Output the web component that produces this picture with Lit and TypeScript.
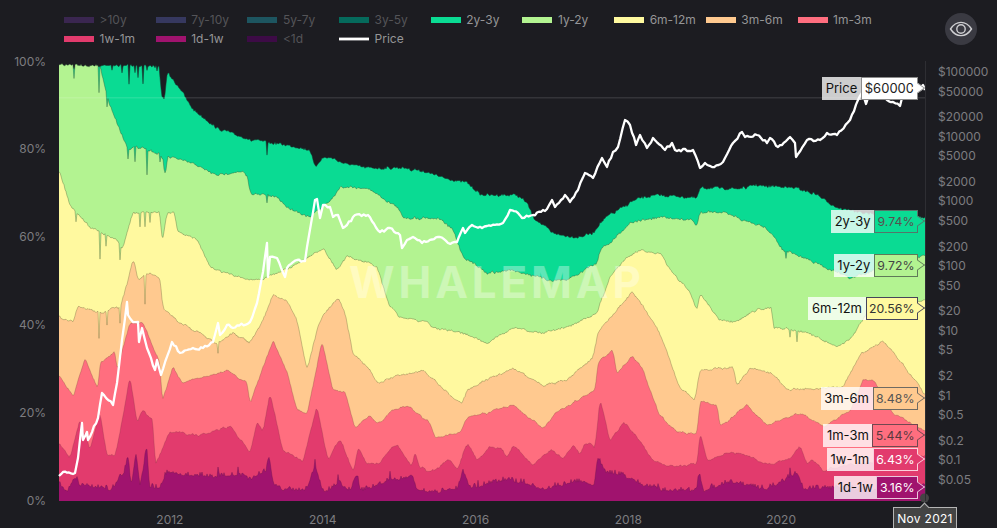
import { LitElement, html, css, svg } from "lit";
import { customElement } from "lit/decorators.js";

type Pt = [number, number];

const pairs = (s: string): Pt[] =>
  s.trim().split(";").map((p) => {
    const [x, y] = p.split(",").map(Number);
    return [x, y] as Pt;
  });

interface Band {
  color: string;
  amp: number;
  wave: number;
  edge: string;
  up?: boolean;
  keys: string;
  spikes: Pt[];
}

const BANDS: Band[] = [
  {
    color: "#0adb93", amp: 1.2, wave: 0.8, edge: "rgba(20,60,50,.5)",
    keys: "59,68;95,68;100,65;130,65;155,66;160,67;161,97;165,98;167,71;183,93;193,110;217,128;250,140;267,142;290,146;310,150;315,167;323,157;333,158;340,162;367,168;400,168;417,170;447,178;467,183;480,195;517,195;527,203;533,217;553,233;577,238;593,233;600,223;610,215;623,207;640,197;660,195;697,198;700,188;747,188;753,185;797,188;817,195;837,208;860,212;890,215;925,218",
    spikes: [[122,8],[129,20],[135,7],[138,11],[143,18],[147,6],[112,5],[267,12],[157,5]],
  },
  {
    color: "#b3f391", amp: 1.1, wave: 0.9, edge: "rgba(40,80,50,.38)",
    keys: "59,65;100,66;107,97;120,130;128,148;143,147;160,155;164,160;165,185;167,157;190,162;217,175;243,172;248,178;250,193;277,197;287,207;303,215;310,217;333,198;340,187;367,188;397,207;403,218;440,218;453,230;463,257;480,267;487,273;513,270;550,280;567,280;597,263;600,250;610,243;630,223;660,217;693,220;697,227;700,212;723,212;743,220;767,228;783,250;810,260;850,278;870,272;900,262;925,255",
    spikes: [[74,15],[99,28],[107,12],[128,10],[135,15],[147,26],[160,8],[267,8],[786,8]],
  },
  {
    color: "#fff99f", amp: 0.9, wave: 0.9, edge: "rgba(70,90,50,.35)",
    keys: "59,170;70,205;90,227;117,240;122,250;133,213;160,212;162,243;167,213;175,212;177,232;197,240;210,267;237,277;260,280;300,263;323,248;337,270;347,257;367,262;377,267;390,307;400,317;427,322;433,328;463,333;487,343;513,328;543,333;567,327;597,313;600,303;610,277;627,257;640,250;660,253;670,270;690,292;697,310;700,293;720,320;733,323;757,310;772,307;773,327;807,332;837,347;850,340;867,313;900,303;925,300",
    spikes: [[76,10],[100,28],[106,12],[120,14],[140,14],[145,14],[150,10],[790,7],[797,10]],
  },
  {
    color: "#ffc98f", amp: 0.9, wave: 1, edge: "rgba(90,90,50,.32)",
    keys: "59,317;73,322;78,305;100,313;120,307;128,280;133,258;138,280;143,277;150,273;160,277;163,308;180,323;200,333;217,343;233,333;250,343;263,320;273,295;287,302;297,320;307,370;317,330;323,315;338,298;345,313;353,353;370,370;377,383;390,378;423,370;447,392;462,405;467,390;497,375;513,368;543,385;567,380;593,357;598,333;610,318;617,310;632,292;643,307;660,333;680,388;695,400;700,370;733,367;737,385;750,368;773,373;787,390;820,388;843,387;860,355;883,340;897,357;920,387;925,394",
    spikes: [[99,26],[107,14],[120,16],[218,10],[145,28]],
  },
  {
    color: "#ff6e7f", amp: 0.7, wave: 1.2, edge: "rgba(110,70,50,.28)",
    keys: "59,375;73,397;85,358;98,390;100,363;115,352;117,370;130,323;143,323;160,363;162,402;173,367;183,383;227,370;247,383;250,403;273,340;287,373;297,410;307,415;322,342;333,390;345,392;355,427;370,415;377,425;393,410;407,405;430,423;435,437;460,432;467,418;497,410;513,405;543,428;557,412;583,397;595,390;598,363;610,352;613,350;617,375;632,355;643,370;660,415;677,433;697,433;700,402;717,405;720,427;747,405;767,425;800,413;823,427;850,410;863,380;873,380;893,413;925,431",
    spikes: [],
  },
  {
    color: "#e23b6d", amp: 0.8, wave: 1.6, edge: "rgba(130,50,70,.28)",
    keys: "59,443;70,457;80,420;90,450;100,413;107,457;115,455;123,417;130,377;137,423;143,410;153,420;155,465;170,432;200,435;217,430;230,427;250,452;257,423;263,432;270,393;283,450;290,453;303,462;317,407;328,460;340,438;353,472;358,448;367,465;380,462;397,443;412,467;415,452;420,467;430,472;450,460;458,470;467,443;477,460;490,447;500,448;507,458;513,445;533,465;553,450;562,460;572,445;580,453;585,442;595,447;600,400;610,442;623,422;640,440;653,460;670,467;697,463;700,433;707,462;733,452;753,458;767,465;790,460;800,445;807,463;812,458;823,470;850,465;880,460;925,455",
    spikes: [],
  },
  {
    color: "#a0136e", amp: 4.5, wave: 1.2, up: true, edge: "rgba(110,20,80,.4)",
    keys: "59,483;67,492;75,477;80,485;100,487;110,490;117,482;125,470;128,450;131,488;136,450;140,488;147,443;149,487;160,487;167,472;187,474;217,477;240,475;250,480;267,469;268,450;273,482;283,489;307,489;315,465;323,492;338,482;350,492;357,473;360,490;393,479;413,477;417,490;433,492;457,489;463,470;470,489;490,482;510,479;543,489;573,482;595,484;597,457;605,472;623,474;640,484;660,490;697,490;699,468;703,490;733,482;767,489;797,473;803,489;833,487;870,490;925,485",
    spikes: [[218,-10],[238,-8],[315,-8],[338,-6],[390,-8],[478,-6],[658,-6],[790,-8]],
  },
];

const PRICE = "59,476;63,472;75,473;78,458;82,423;83,440;87,432;88,440;98,418;102,393;113,405;117,383;122,340;127,302;128,315;133,322;138,322;139,342;142,328;147,348;155,370;157,360;161,375;172,342;180,353;187,350;203,348;213,342;218,323;220,335;227,325;233,328;250,322;257,303;263,272;267,243;268,277;270,257;277,258;285,277;287,268;297,260;305,261;307,247;315,200;317,199;320,218;323,205;330,207;333,217;338,215;343,228;347,225;355,215;368,215;380,232;390,228;400,235;402,248;407,240;413,237;422,243;440,237;448,243;457,242;463,228;465,233;472,225;482,228;487,226;503,223;510,210;518,213;522,218;533,215;547,209;552,200;555,207;565,195;570,202;578,190;585,173;593,178;602,158;607,167;613,152;618,147;625,120;630,125;636,145;640,135;647,148;653,138;665,150;672,143;675,150;693,150;700,168;705,163;712,167;723,162;733,143;742,132;745,137;757,135;767,143;770,138;778,147;790,137;795,143;796,157;807,140;820,140;827,133;837,135;850,120;858,100;862,93;866,104;870,92;880,90;887,100;893,102;900,106;902,98;908,90;915,88;920,88;923,85;925,90";

const LEFT = 59;
const RIGHT = 925.5;
const BOTTOM = 501;

let seed = 7;
const rnd = () => {
  seed = (seed * 16807) % 2147483647;
  return seed / 2147483647;
};

function linear(keys: Pt[], x: number, k: number): number {
  const [x0, y0] = keys[k];
  const [x1, y1] = keys[k + 1];
  const t = Math.min(1, Math.max(0, (x - x0) / Math.max(0.5, x1 - x0)));
  return y0 + (y1 - y0) * t;
}

function edgePoints(b: Band): Pt[] {
  const keys = pairs(b.keys);
  const spikes = new Map(b.spikes.map((s) => [s[0], s[1]]));
  const base: number[] = [];
  let k = 0;
  for (let x = LEFT; x <= 925; x += 1) {
    while (k < keys.length - 2 && x > keys[k + 1][0]) k++;
    base.push(linear(keys, x, k));
  }
  const smooth = base.map((_, i) => {
    let s = 0;
    let n = 0;
    for (let j = Math.max(0, i - 1); j <= Math.min(base.length - 1, i + 1); j++) {
      s += base[j];
      n++;
    }
    return s / n;
  });
  const waves: number[] = [];
  for (let i = 0; i <= base.length / 4 + 2; i++) waves.push((rnd() - 0.5) * 2 * b.wave);
  const out: Pt[] = [];
  smooth.forEach((y, i) => {
    const w = i / 4;
    const j = Math.floor(w);
    const f = w - j;
    const slow = waves[j] * (1 - f) + waves[j + 1] * f;
    const fast = b.up ? 1 - Math.pow(rnd(), 2.5) * b.amp : (rnd() - 0.5) * 2 * b.amp;
    const x = LEFT + i;
    out.push([x, Math.min(BOTTOM, y + slow + fast + (spikes.get(x) ?? 0))]);
  });
  out.push([RIGHT, out[out.length - 1][1]]);
  return out;
}

function pricePoints(): string {
  const keys = pairs(PRICE);
  const out: string[] = [];
  keys.forEach((p, i) => {
    out.push(`${p[0]},${p[1]}`);
    const q = keys[i + 1];
    if (!q) return;
    const n = Math.floor((q[0] - p[0]) / 2);
    for (let s = 1; s < n; s++) {
      const t = s / n;
      const x = p[0] + (q[0] - p[0]) * t;
      const y = p[1] + (q[1] - p[1]) * t + (rnd() - 0.5) * 2.6;
      out.push(`${x.toFixed(1)},${y.toFixed(1)}`);
    }
  });
  return out.join(" ");
}

const toPath = (pts: Pt[]) => "M" + pts.map((p) => `${p[0]} ${p[1].toFixed(1)}`).join("L");

const LEGEND = [
  { n: ">10y", c: "#3a2650", off: true },
  { n: "7y-10y", c: "#36385f", off: true },
  { n: "5y-7y", c: "#1d5560", off: true },
  { n: "3y-5y", c: "#056a5c", off: true },
  { n: "2y-3y", c: "#0adb93" },
  { n: "1y-2y", c: "#b3f391" },
  { n: "6m-12m", c: "#fff99f" },
  { n: "3m-6m", c: "#ffc98f" },
  { n: "1m-3m", c: "#ff6e7f" },
  { n: "1w-1m", c: "#e23b6d" },
  { n: "1d-1w", c: "#a0136e" },
  { n: "<1d", c: "#3d0b46", off: true },
  { n: "Price", c: "#fff", line: true },
];

const TAGS = [
  { n: "Price", v: "$60000", top: 16, bg: "#fff", bd: "#8a8a8a", fg: "#222", big: true },
  { n: "2y-3y", v: "9.74%", top: 149, bg: "#0adb93", bd: "#54756a", fg: "#5a4f4f" },
  { n: "1y-2y", v: "9.72%", top: 193, bg: "#b3f391", bd: "#5f7a58", fg: "#444" },
  { n: "6m-12m", v: "20.56%", top: 236, bg: "#fff99f", bd: "#45455a", fg: "#333" },
  { n: "3m-6m", v: "8.48%", top: 326, bg: "#ffc98f", bd: "#6f6a62", fg: "#555" },
  { n: "1m-3m", v: "5.44%", top: 363, bg: "#ff6e7f", bd: "#704850", fg: "#5a3a40" },
  { n: "1w-1m", v: "6.43%", top: 387, bg: "#e23b6d", bd: "#fbd0dc", fg: "#fff" },
  { n: "1d-1w", v: "3.16%", top: 415, bg: "#a0136e", bd: "#eac8dc", fg: "#fff" },
];

const TICKS = [100000, 50000, 20000, 10000, 5000, 2000, 1000, 500, 200, 100, 50, 20, 10, 5, 2, 1, 0.5, 0.2, 0.1, 0.05];

@customElement("app-root")
export class AppRoot extends LitElement {
  static styles = css`
    :host {
      display: block;
      width: 997px;
      height: 528px;
      overflow: hidden;
      background: #1c1c21;
      font-family: Inter, "Liberation Sans", sans-serif;
      font-size: 12px;
      color: #7d7d80;
    }
    .page {
      display: grid;
      grid-template-columns: 59px 867px 71px;
      grid-template-rows: 61px 440px 27px;
      height: 528px;
    }
    .head {
      grid-column: 1 / 4;
      display: flex;
      justify-content: space-between;
      align-items: flex-start;
      padding: 10px 20px 0 64px;
    }
    .legend {
      display: grid;
      grid-template-columns: repeat(9, 91.7px);
      grid-auto-rows: 19px;
    }
    .item {
      display: flex;
      align-items: center;
      gap: 5.5px;
      color: #959597;
      white-space: nowrap;
    }
    .item.off {
      color: #545458;
    }
    .swatch {
      width: 30px;
      height: 6px;
      flex: none;
    }
    .swatch.line {
      height: 2px;
      border-block: 1px solid #77777a;
      box-sizing: content-box;
    }
    .eye {
      width: 32px;
      height: 32px;
      margin-top: 3px;
      border-radius: 50%;
      background: #3a3a42;
      display: flex;
      align-items: center;
      justify-content: center;
    }
    .yaxis {
      margin: -8.5px 0 -9px;
      padding-right: 13px;
      display: flex;
      flex-direction: column;
      justify-content: space-between;
      align-items: flex-end;
      line-height: 18px;
    }
    .plot {
      position: relative;
    }
    .plot > svg {
      display: block;
      overflow: visible;
    }
    .mark {
      position: absolute;
      left: 290px;
      top: 196px;
      font-size: 44px;
      line-height: 50px;
      font-weight: 700;
      letter-spacing: 3.8px;
      color: rgba(255, 255, 255, 0.34);
      white-space: nowrap;
    }
    .tag {
      position: absolute;
      right: 8px;
      height: 23px;
      display: flex;
      font-size: 13px;
      line-height: 23px;
      white-space: nowrap;
    }
    .name {
      padding: 0 3.5px;
      background: rgba(255, 255, 255, 0.78);
      color: #111;
    }
    .value {
      position: relative;
      box-sizing: border-box;
      padding: 0 2.5px;
      font-size: 12.3px;
      line-height: 21px;
      border: 1px solid var(--bd);
      background: var(--bg);
      color: var(--fg);
    }
    .value.big {
      font-size: 13px;
      padding: 0 3px;
    }
    .value::after {
      content: "";
      position: absolute;
      right: -5.5px;
      top: 5px;
      width: 9px;
      height: 9px;
      background: var(--bg);
      border-top: 1px solid var(--bd);
      border-right: 1px solid var(--bd);
      transform: scaleY(0.72) rotate(45deg);
    }
    .date {
      position: absolute;
      left: 834px;
      top: 446px;
      width: 64px;
      height: 21px;
      box-sizing: border-box;
      border: 1px solid #b5b5b5;
      border-bottom: 0;
      background: #444;
      color: #fff;
      font-size: 12px;
      letter-spacing: 0.3px;
      line-height: 21px;
      text-align: center;
      white-space: nowrap;
    }
    .date::before {
      content: "";
      position: absolute;
      left: 27px;
      top: -4px;
      width: 6px;
      height: 6px;
      background: #444;
      border-top: 1px solid #b5b5b5;
      border-left: 1px solid #b5b5b5;
      transform: rotate(45deg);
    }
    .prices {
      position: relative;
      border-left: 1px solid #2e2e33;
      margin-left: -1px;
    }
    .tick {
      position: absolute;
      left: 12px;
      line-height: 16px;
      white-space: nowrap;
    }
    .xaxis {
      grid-column: 2 / 4;
      display: flex;
      padding: 10px 0 0 34.5px;
      line-height: 18px;
    }
    .xaxis span {
      width: 152.8px;
      text-align: center;
      flex: none;
    }
  `;

  private paths = BANDS.map((b) => {
    const pts = edgePoints(b);
    return {
      b,
      top: toPath(pts),
      fill: toPath(pts) + `L${RIGHT} ${BOTTOM}L${LEFT} ${BOTTOM}Z`,
    };
  });

  private price = pricePoints();

  render() {
    return html`
      <div class="page">
        <header class="head">
          <div class="legend">
            ${LEGEND.map(
              (l) => html`<div class="item ${l.off ? "off" : ""}">
                <span class="swatch ${l.line ? "line" : ""}" style="background:${l.c}"></span>${l.n}
              </div>`
            )}
          </div>
          <div class="eye">
            <svg width="24" height="24" viewBox="0 0 24 24" fill="none" stroke="#cfcfd2" stroke-width="1.4">
              <path d="M1.5 12C4.5 7.4 8 5.4 12 5.4s7.5 2 10.5 6.6c-3 4.6-6.5 6.6-10.5 6.6S4.5 16.6 1.5 12Z" />
              <circle cx="12" cy="12" r="4.2" />
            </svg>
          </div>
        </header>

        <div class="yaxis">
          ${["100%", "80%", "60%", "40%", "20%", "0%"].map((t) => html`<span>${t}</span>`)}
        </div>

        <div class="plot">
          <svg width="867" height="440" viewBox="59 61 867 440">
            ${this.paths.map(
              (p) => svg`
                <path d=${p.fill} fill=${p.b.color}></path>
                <path d=${p.top} fill="none" stroke=${p.b.edge} stroke-width="1"></path>`
            )}
            <rect x="59" y="97" width="866" height="1.5" fill="rgba(255,255,255,.11)"></rect>
            <polyline points=${this.price} fill="none" stroke="#fff" stroke-width="2.3" stroke-linejoin="round"></polyline>
            <circle cx="924.5" cy="498" r="4.5" fill="#444"></circle>
          </svg>
          <div class="mark">WHALEMAP</div>
          ${TAGS.map(
            (t) => html`<div class="tag" style="top:${t.top}px">
              <span class="name">${t.n}</span>
              <span class="value ${t.big ? "big" : ""}" style="--bg:${t.bg};--bd:${t.bd};--fg:${t.fg}">${t.v}</span>
            </div>`
          )}
          <div class="date">Nov 2021</div>
        </div>

        <div class="prices">
          ${TICKS.map(
            (p) => html`<span class="tick" style="top:${(72 + 64.7 * Math.log10(100000 / p) - 61 - 8).toFixed(1)}px">$${p}</span>`
          )}
        </div>

        <div></div>
        <div class="xaxis">
          ${["2012", "2014", "2016", "2018", "2020"].map((y) => html`<span>${y}</span>`)}
        </div>
      </div>
    `;
  }
}
